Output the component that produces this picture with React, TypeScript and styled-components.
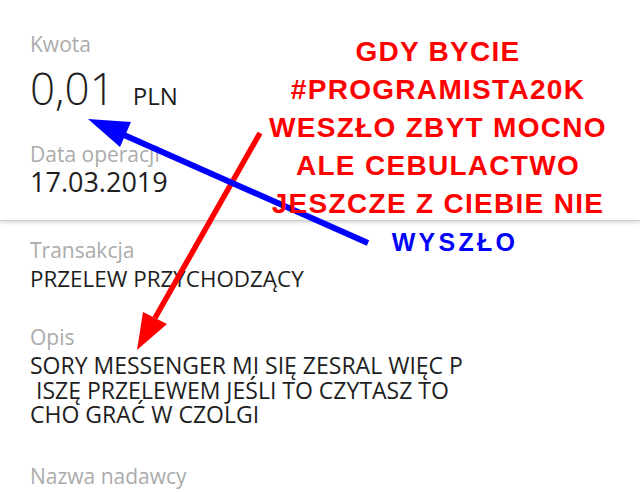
import React from "react";
import styled, { createGlobalStyle } from "styled-components";

const GlobalStyle = createGlobalStyle`
  html, body { margin: 0; padding: 0; background: #ffffff; }
  body { font-family: "Open Sans", "DejaVu Sans", sans-serif; }
`;

const Page = styled.div`
  position: relative;
  width: 640px;
  height: 492px;
  overflow: hidden;
  background: #ffffff;
`;

const TopCard = styled.section`
  box-sizing: border-box;
  height: 221px;
  padding: 32px 30px 0;
  border-bottom: 1px solid #cfcfcf;
  box-shadow: 0 2px 3px rgba(0, 0, 0, 0.14);
  position: relative;
  z-index: 1;
  background: #fff;
`;

const Details = styled.section`
  padding: 17px 30px 0;
`;

const Field = styled.div<{ $gap?: number }>`
  margin-top: ${(p) => p.$gap ?? 0}px;
  display: flex;
  flex-direction: column;
`;

const Label = styled.div<{ $space?: number }>`
  font-size: 21px;
  line-height: 24px;
  font-weight: 400;
  color: #ababab;
  margin-bottom: ${(p) => p.$space ?? 0}px;
`;

const Amount = styled.div`
  display: flex;
  align-items: baseline;
  gap: 18px;
  margin-top: 8px;
  color: #1e1e1e;
`;

const AmountNumber = styled.span`
  font-size: 44px;
  line-height: 48px;
  font-weight: 300;
`;

const Currency = styled.span`
  font-size: 24px;
  font-weight: 400;
`;

const Value = styled.div<{ $size?: number; $lh?: number }>`
  font-size: ${(p) => p.$size ?? 22}px;
  line-height: ${(p) => p.$lh ?? 25}px;
  color: #1e1e1e;
  font-weight: 400;
  white-space: pre;
`;

const Overlay = styled.svg`
  position: absolute;
  left: 0;
  top: 0;
  z-index: 2;
  pointer-events: none;
`;

const Caption = styled.div`
  position: absolute;
  left: 238px;
  top: 33px;
  width: 400px;
  z-index: 3;
  text-align: center;
  font-family: "Liberation Sans", Arial, sans-serif;
  font-weight: 700;
  font-size: 28px;
  line-height: 38px;
  letter-spacing: 1.3px;
  color: #ff0000;
`;

const CaptionLine = styled.div``;

const CaptionTail = styled.div`
  color: #0000ff;
  font-size: 25px;
  letter-spacing: 3.3px;
  padding-left: 34px;
`;

export default function App() {
  return (
    <>
      <GlobalStyle />
      <Page>
        <TopCard>
          <Field>
            <Label>Kwota</Label>
            <Amount>
              <AmountNumber>0,01</AmountNumber>
              <Currency>PLN</Currency>
            </Amount>
          </Field>
          <Field $gap={30}>
            <Label $space={1}>Data operacji</Label>
            <Value $size={27} $lh={30}>17.03.2019</Value>
          </Field>
        </TopCard>
        <Details>
          <Field>
            <Label $space={4}>Transakcja</Label>
            <Value $size={22.4}>PRZELEW PRZYCHODZĄCY</Value>
          </Field>
          <Field $gap={34}>
            <Label $space={4}>Opis</Label>
            <Value $size={23} $lh={24.5}>
              {"SORY MESSENGER MI SIĘ ZESRAL WIĘC P\n ISZĘ PRZELEWEM JEŚLI TO CZYTASZ TO\nCHO GRAĆ W CZOLGI"}
            </Value>
          </Field>
          <Field $gap={37}>
            <Label>Nazwa nadawcy</Label>
          </Field>
        </Details>

        <Overlay width="640" height="492" viewBox="0 0 640 492">
          <line x1="260" y1="133" x2="155" y2="318" stroke="#ff0000" strokeWidth="5.5" />
          <polygon points="137,350 143,312 167,324" fill="#ff0000" />
          <line x1="368" y1="243" x2="124" y2="135" stroke="#0000ff" strokeWidth="6" />
          <polygon points="88,119 131,122 120,147" fill="#0000ff" />
        </Overlay>

        <Caption>
          <CaptionLine>GDY BYCIE</CaptionLine>
          <CaptionLine>#PROGRAMISTA20K</CaptionLine>
          <CaptionLine>WESZŁO ZBYT MOCNO</CaptionLine>
          <CaptionLine>ALE CEBULACTWO</CaptionLine>
          <CaptionLine>JESZCZE Z CIEBIE NIE</CaptionLine>
          <CaptionTail>WYSZŁO</CaptionTail>
        </Caption>
      </Page>
    </>
  );
}
